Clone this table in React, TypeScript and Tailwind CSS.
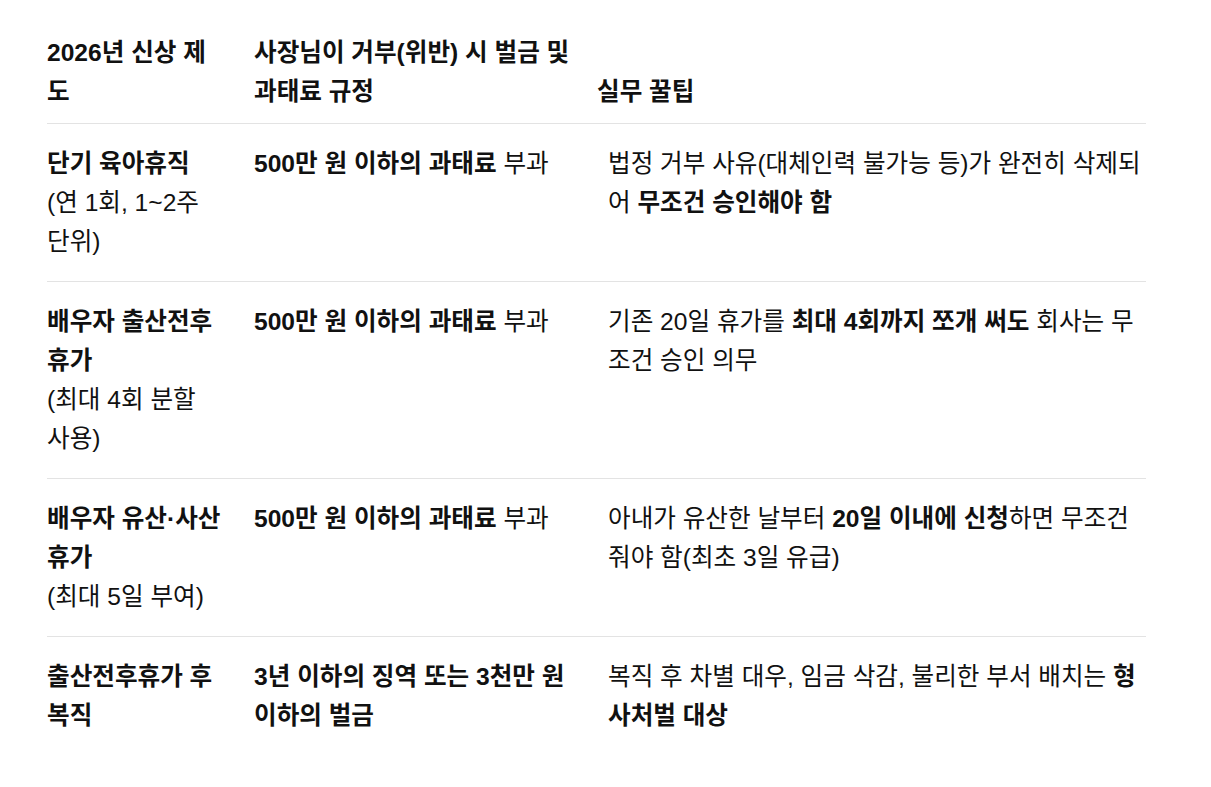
import React from "react";

const rows: { a: React.ReactNode; b: React.ReactNode; c: React.ReactNode }[] = [
  {
    a: (
      <>
        <b className="font-bold">단기 육아휴직</b>
        <br />
        (연 1회, 1~2주 단위)
      </>
    ),
    b: (
      <>
        <b className="font-bold">500만 원 이하의 과태료</b> 부과
      </>
    ),
    c: (
      <>
        법정 거부 사유(대체인력 불가능 등)가 완전히 삭제되어{" "}
        <b className="font-bold">무조건 승인해야 함</b>
      </>
    ),
  },
  {
    a: (
      <>
        <b className="font-bold">배우자 출산전후 휴가</b>
        <br />
        (최대 4회 분할 사용)
      </>
    ),
    b: (
      <>
        <b className="font-bold">500만 원 이하의 과태료</b> 부과
      </>
    ),
    c: (
      <>
        기존 20일 휴가를 <b className="font-bold">최대 4회까지 쪼개 써도</b> 회사는 무조건 승인 의무
      </>
    ),
  },
  {
    a: (
      <>
        <b className="font-bold">배우자 유산·사산 휴가</b>
        <br />
        (최대 5일 부여)
      </>
    ),
    b: (
      <>
        <b className="font-bold">500만 원 이하의 과태료</b> 부과
      </>
    ),
    c: (
      <>
        아내가 유산한 날부터 <b className="font-bold">20일 이내에 신청</b>하면 무조건 줘야 함(최초 3일 유급)
      </>
    ),
  },
  {
    a: <b className="font-bold">출산전후휴가 후 복직</b>,
    b: <b className="font-bold">3년 이하의 징역 또는 3천만 원 이하의 벌금</b>,
    c: (
      <>
        복직 후 차별 대우, 임금 삭감, 불리한 부서 배치는 <b className="font-bold">형사처벌 대상</b>
      </>
    ),
  },
];

export default function App() {
  return (
    <div
      className="min-h-screen bg-white pl-[47px] pt-[21px] text-[24.6px] leading-[39px] text-[#111111]"
      style={{ fontFamily: '"Liberation Sans", "Noto Sans CJK KR", sans-serif' }}
    >
      <table className="w-[1099px] table-fixed border-collapse">
        <colgroup>
          <col className="w-[191px]" />
          <col className="w-[346px]" />
          <col className="w-[562px]" />
        </colgroup>
        <thead>
          <tr className="border-b border-[#e3e3e3]">
            <th className="pb-[12px] pt-[12px] pr-4 text-left align-bottom font-bold">2026년 신상 제도</th>
            <th className="pl-4 pr-0 pb-[12px] pt-[12px] text-left align-bottom font-bold">
              사장님이 거부(위반) 시 벌금 및 과태료 규정
            </th>
            <th className="pl-[13px] pb-[12px] pt-[12px] text-left align-bottom font-bold">실무 꿀팁</th>
          </tr>
        </thead>
        <tbody>
          {rows.map((r, i) => (
            <tr key={i} className={i < rows.length - 1 ? "border-b border-[#e3e3e3]" : ""}>
              <td className="py-5 pr-4 align-top">{r.a}</td>
              <td className="py-5 pl-4 pr-0 align-top">{r.b}</td>
              <td className="py-5 pl-[24px] align-top">{r.c}</td>
            </tr>
          ))}
        </tbody>
      </table>
    </div>
  );
}
